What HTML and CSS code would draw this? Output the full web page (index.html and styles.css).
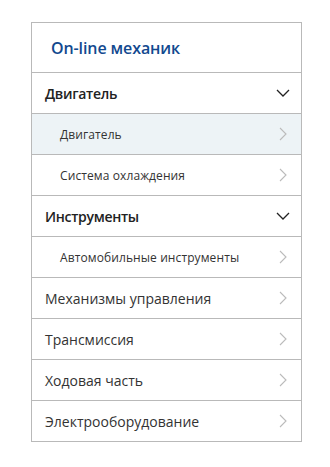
FILE: index.html
```html
<!DOCTYPE html>
<html lang="ru">
<head>
  <meta charset="UTF-8" />
  <meta name="viewport" content="width=device-width, initial-scale=1.0"/>
  <title>On-line механик</title>
  <link rel="stylesheet" href="styles.css">
</head>
<body>
  <div class="menu">
    <div class="menu-title">On-line механик</div>

    <div class="item group">
      <span>Двигатель</span>
      <svg class="chev-down" width="14" height="8" viewBox="0 0 14 8"><path d="M1 1l6 6 6-6" fill="none" stroke="#222" stroke-width="1.3"/></svg>
    </div>
    <div class="item sub active">
      <span>Двигатель</span>
      <svg class="chev" width="8" height="14" viewBox="0 0 8 14"><path d="M1 1l6 6-6 6" fill="none" stroke="#bbb" stroke-width="1.1"/></svg>
    </div>
    <div class="item sub">
      <span>Система охлаждения</span>
      <svg class="chev" width="8" height="14" viewBox="0 0 8 14"><path d="M1 1l6 6-6 6" fill="none" stroke="#bbb" stroke-width="1.1"/></svg>
    </div>

    <div class="item group">
      <span>Инструменты</span>
      <svg class="chev-down" width="14" height="8" viewBox="0 0 14 8"><path d="M1 1l6 6 6-6" fill="none" stroke="#222" stroke-width="1.3"/></svg>
    </div>
    <div class="item sub">
      <span>Автомобильные инструменты</span>
      <svg class="chev" width="8" height="14" viewBox="0 0 8 14"><path d="M1 1l6 6-6 6" fill="none" stroke="#bbb" stroke-width="1.1"/></svg>
    </div>

    <div class="item">
      <span>Механизмы управления</span>
      <svg class="chev" width="8" height="14" viewBox="0 0 8 14"><path d="M1 1l6 6-6 6" fill="none" stroke="#bbb" stroke-width="1.1"/></svg>
    </div>
    <div class="item">
      <span>Трансмиссия</span>
      <svg class="chev" width="8" height="14" viewBox="0 0 8 14"><path d="M1 1l6 6-6 6" fill="none" stroke="#bbb" stroke-width="1.1"/></svg>
    </div>
    <div class="item">
      <span>Ходовая часть</span>
      <svg class="chev" width="8" height="14" viewBox="0 0 8 14"><path d="M1 1l6 6-6 6" fill="none" stroke="#bbb" stroke-width="1.1"/></svg>
    </div>
    <div class="item">
      <span>Электрооборудование</span>
      <svg class="chev" width="8" height="14" viewBox="0 0 8 14"><path d="M1 1l6 6-6 6" fill="none" stroke="#bbb" stroke-width="1.1"/></svg>
    </div>
  </div>
</body>
</html>
```

FILE: styles.css
```css
body {
  font-family: "Open Sans", "Noto Sans", sans-serif;
  margin: 0;
  padding: 22px 29px 0 31px;
  background: #fff;
  color: #333;
}
.menu {
  width: 269px;
  border: 1px solid #b9b9b9;
}
.menu-title {
  height: 49px;
  padding-left: 19px;
  display: flex;
  align-items: center;
  font-size: 16px;
  font-weight: 600;
  color: #12498f;
  letter-spacing: -0.1px;
}
.item {
  height: 40px;
  border-top: 1px solid #b9b9b9;
  display: flex;
  align-items: center;
  justify-content: space-between;
  padding: 0 13px 0 13px;
  font-size: 14px;
}
.item.group {
  font-weight: 600;
  color: #222;
  letter-spacing: -0.3px;
  padding-right: 11px;
}
.item.sub {
  padding-left: 28px;
  font-size: 12px;
  letter-spacing: 0.1px;
}
.item.active {
  background: #edf3f6;
}
.chev {
  margin-right: 1px;
}
```
